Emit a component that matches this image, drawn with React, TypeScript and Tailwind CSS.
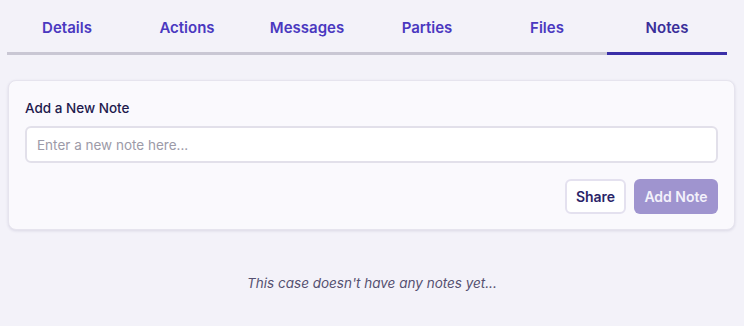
const TABS = ['Details', 'Actions', 'Messages', 'Parties', 'Files', 'Notes']

export default function App() {
  const active = 'Notes'

  return (
    <div className="min-h-[326px] w-[744px] bg-[#f3f2f9] font-['Inter',sans-serif]">
      <div className="flex pl-[7px] pr-[17px]">
        {TABS.map(tab => (
          <button
            key={tab}
            className={
              tab === active
                ? 'w-[120px] h-[55px] border-b-[3px] border-[#3a2fa8] text-[15px] font-semibold text-[#3a2f9a] pt-[5px]'
                : 'w-[120px] h-[55px] border-b-[3px] border-[#c9c7d4] text-[15px] font-semibold text-[#4a38c0] pt-[5px]'
            }
          >
            {tab}
          </button>
        ))}
      </div>

      <div className="mx-[8px] mt-[25px] w-[727px] rounded-lg border border-[#e6e4ee] bg-[#faf9fd] px-4 pt-[19px] pb-[15px] shadow-[0_1px_3px_rgba(40,30,90,0.12)]">
        <label className="block text-[13.5px] font-medium text-[#1e1a4d] leading-4">Add a New Note</label>
        <input
          placeholder="Enter a new note here..."
          className="mt-[10px] h-[37px] w-full rounded-md border-2 border-[#e2e0ea] bg-white px-[10px] text-[13.5px] text-gray-800 placeholder:text-[#9c9aa8] outline-none"
        />
        <div className="mt-[16px] flex justify-end gap-2">
          <button className="h-[35px] w-[61px] rounded-md border-2 border-[#e4e1ef] bg-white text-[14px] font-semibold text-[#2a2468]">
            Share
          </button>
          <button className="h-[35px] w-[84px] rounded-md bg-[#9f94cf] text-[14px] font-semibold text-[#f3f1fb]">
            Add Note
          </button>
        </div>
      </div>

      <p className="mt-[43px] text-center text-[13.5px] italic text-[#555070]">
        This case doesn't have any notes yet...
      </p>
    </div>
  )
}
